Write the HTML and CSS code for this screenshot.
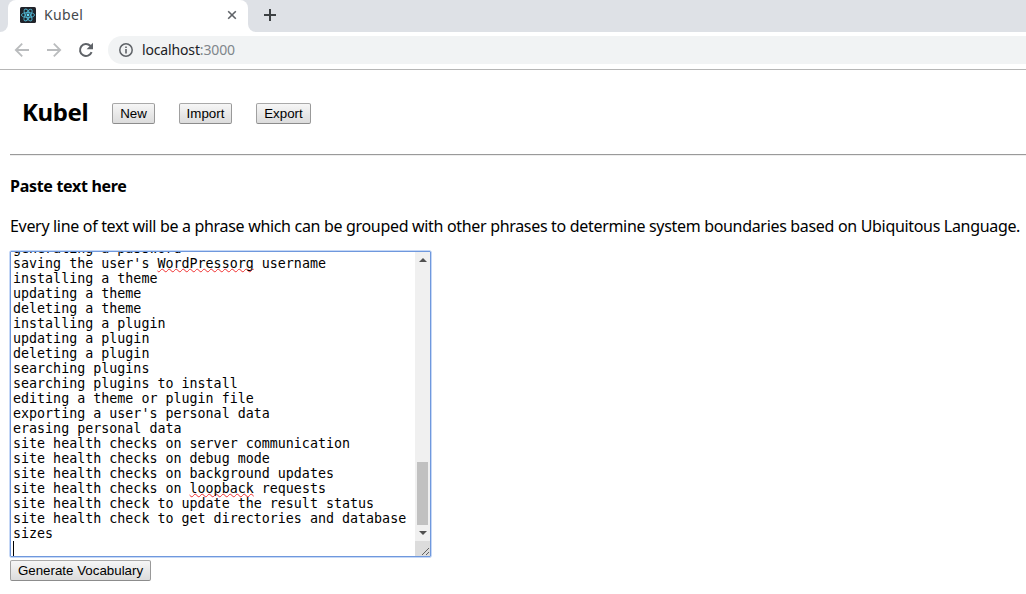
FILE: index.html
```html
<!DOCTYPE html>
<html lang="en">
<head>
<meta charset="utf-8">
<title>Kubel</title>
<link rel="stylesheet" href="styles.css">
</head>
<body>
<div class="tabstrip">
  <div class="strip-left"></div>
  <div class="tab">
    <svg class="favicon" width="16" height="16" viewBox="0 0 16 16">
      <rect width="16" height="16" rx="1.5" fill="#20232a"/>
      <g fill="none" stroke="#4fb3cf" stroke-width=".9">
        <ellipse cx="8" cy="8" rx="6.6" ry="2.5"/>
        <ellipse cx="8" cy="8" rx="6.6" ry="2.5" transform="rotate(60 8 8)"/>
        <ellipse cx="8" cy="8" rx="6.6" ry="2.5" transform="rotate(120 8 8)"/>
      </g>
      <circle cx="8" cy="8" r="1.4" fill="#61dafb"/>
    </svg>
    <span class="tab-title">Kubel</span>
    <svg class="tab-close" width="10" height="10" viewBox="0 0 10 10"><path d="M1.2 1.2l7.6 7.6M8.8 1.2L1.2 8.8" stroke="#5f6368" stroke-width="1.6" fill="none"/></svg>
  </div>
  <div class="strip-right">
    <svg width="12" height="12" viewBox="0 0 12 12"><path d="M6 0v12M0 6h12" stroke="#3c4043" stroke-width="2" fill="none"/></svg>
  </div>
</div>
<div class="toolbar">
  <svg class="nav" width="16" height="16" viewBox="0 0 16 16"><path d="M15 8H2M8.2 1.6L1.8 8l6.4 6.4" stroke="#babcbe" stroke-width="1.8" fill="none"/></svg>
  <svg class="nav" width="16" height="16" viewBox="0 0 16 16"><path d="M1 8h13M7.8 1.6L14.2 8l-6.4 6.4" stroke="#babcbe" stroke-width="1.8" fill="none"/></svg>
  <svg class="nav" width="16" height="16" viewBox="0 0 16 16"><path d="M13.6 10.2A6 6 0 1 1 12.3 3.8L13.4 5" stroke="#5f6368" stroke-width="2" fill="none"/><path d="M15 .8v6.4H8.6z" fill="#5f6368"/></svg>
  <div class="address">
    <svg width="14" height="14" viewBox="0 0 14 14"><circle cx="7" cy="7" r="6.2" stroke="#5f6368" stroke-width="1.5" fill="none"/><path d="M7 6v4.6M7 3.4v1.6" stroke="#5f6368" stroke-width="1.6"/></svg>
    <span class="url">localhost<span class="port">:3000</span></span>
  </div>
</div>
<main class="page">
  <header class="header">
    <h1 class="brand">Kubel</h1>
    <button class="btn new">New</button>
    <button class="btn import">Import</button>
    <button class="btn export">Export</button>
  </header>
  <hr class="rule">
  <h2 class="heading">Paste text here</h2>
  <p class="intro">Every line of text will be a phrase which can be grouped with other phrases to determine system boundaries based on Ubiquitous Language.</p>
  <div class="editor">
    <div class="lines">
      <div>generating a password</div>
      <div>saving the user's <span class="misspelt">WordPressorg</span> username</div>
      <div>installing a theme</div>
      <div>updating a theme</div>
      <div>deleting a theme</div>
      <div>installing a plugin</div>
      <div>updating a plugin</div>
      <div>deleting a plugin</div>
      <div>searching plugins</div>
      <div>searching plugins to install</div>
      <div>editing a theme or plugin file</div>
      <div>exporting a user's personal data</div>
      <div>erasing personal data</div>
      <div>site health checks on server communication</div>
      <div>site health checks on debug mode</div>
      <div>site health checks on background updates</div>
      <div>site health checks on <span class="misspelt">loopback</span> requests</div>
      <div>site health check to update the result status</div>
      <div>site health check to get directories and database</div>
      <div>sizes</div>
      <div class="caret-line"></div>
    </div>
    <div class="scrollbar">
      <svg class="up" width="8" height="4" viewBox="0 0 8 4"><path d="M0 4l4-4 4 4z" fill="#505050"/></svg>
      <div class="thumb"></div>
      <svg width="8" height="4" viewBox="0 0 8 4"><path d="M0 0l4 4 4-4z" fill="#505050"/></svg>
      <svg class="grip" width="15" height="15" viewBox="0 0 15 15"><rect width="15" height="15" fill="#dcdcdc"/><path d="M7 14l7-7M11 14l3-3" stroke="#606060" stroke-width="1"/></svg>
    </div>
  </div>
  <button class="btn generate">Generate Vocabulary</button>
</main>
</body>
</html>
```
FILE: styles.css
```css
* { box-sizing: border-box; }
body {
  margin: 0;
  height: 594px;
  overflow: hidden;
  background: #fff;
  color: #000;
  font-family: "Noto Sans", sans-serif;
}
svg { display: block; flex: none; }

/* Browser frame */
.tabstrip { display: flex; height: 32px; background: #fff; }
.strip-left { width: 8px; background: #dee1e6; border-bottom-right-radius: 8px; }
.tab {
  display: flex;
  align-items: center;
  width: 240px;
  padding: 0 11px 2px 12px;
  background: linear-gradient(#dee1e6 8px, #fff 8px);
  position: relative;
}
.tab::before {
  content: "";
  position: absolute;
  inset: 0;
  background: #fff;
  border-radius: 8px 8px 0 0;
}
.tab > * { position: relative; }
.tab-title { flex: 1; margin-left: 8px; font-size: 14px; line-height: 20px; color: #45494d; letter-spacing: .35px; }
.strip-right {
  flex: 1;
  display: flex;
  align-items: center;
  padding: 0 0 2px 16px;
  background: #dee1e6;
  border-bottom-left-radius: 8px;
}
.toolbar {
  display: flex;
  align-items: center;
  gap: 16px;
  height: 38px;
  padding-left: 14px;
  padding-bottom: 1px;
  border-bottom: 1px solid #b6b6b6;
}
.address {
  flex: 1;
  display: flex;
  align-items: center;
  gap: 9px;
  height: 28px;
  margin-left: -2px;
  padding-left: 11px;
  background: #f1f3f4;
  border-radius: 14px 0 0 14px;
}
.url { font-size: 14px; line-height: 20px; color: #202124; letter-spacing: -.15px; }
.port { color: #80868b; }

/* Page */
.page { padding-left: 10px; }
.header {
  display: flex;
  align-items: center;
  height: 84px;
  padding-left: 12px;
}
.rule {
  height: 2px;
  margin: 0;
  border: 0;
  border-top: 1px solid #9a9a9a;
  background: #eee;
}
.brand { margin: 0; width: 90px; font-size: 24px; line-height: 30px; font-weight: 700; letter-spacing: -.4px; }
.btn {
  display: block;
  height: 21px;
  padding: 0;
  border: 1px solid #999;
  border-radius: 2px;
  border-color: #a9a9a9 #999 #8c8c8c #a0a0a0;
  background: linear-gradient(#f6f6f6, #dcdcdc);
  color: #000;
  font: 13.333px/18px "Liberation Sans", Arial, sans-serif;
}
.header .btn { margin-top: 3px; }
.new { width: 43px; }
.import { width: 53px; margin-left: 24px; }
.export { width: 55px; margin-left: 24px; }
.heading { margin: 19px 0 0; font-size: 16px; line-height: 22px; font-weight: 700; letter-spacing: -.3px; }
.intro { margin: 18px 0 0; font-size: 16px; line-height: 22px; letter-spacing: -.32px; white-space: nowrap; }
.editor {
  display: flex;
  width: 421px;
  height: 306px;
  margin-top: 14px;
  border: 1px solid #6f98dd;
  box-shadow: 0 0 0 .5px #8db2ee;
  border-radius: 1px;
}
.lines {
  flex: 1;
  display: flex;
  flex-direction: column;
  justify-content: flex-end;
  overflow: hidden;
  padding-left: 2px;
  font: 13.333px/15px "DejaVu Sans Mono", monospace;
  white-space: pre;
}
.lines > div { flex: none; height: 15px; }
.misspelt {
  text-decoration: underline wavy #f03030 .7px;
  text-decoration-skip-ink: none;
  text-underline-offset: 0;
}
.caret-line::before { content: ""; display: block; width: 1px; height: 15px; background: #000; }
.scrollbar {
  display: flex;
  flex-direction: column;
  align-items: center;
  width: 15px;
  background: #f0f0f0;
}
.up { margin-top: 6px; }
.thumb { width: 11px; height: 63px; margin: auto 0 6px; background: #c1c1c1; }
.grip { margin-top: 6px; }
.generate { width: 141px; margin-top: 3px; }
```
